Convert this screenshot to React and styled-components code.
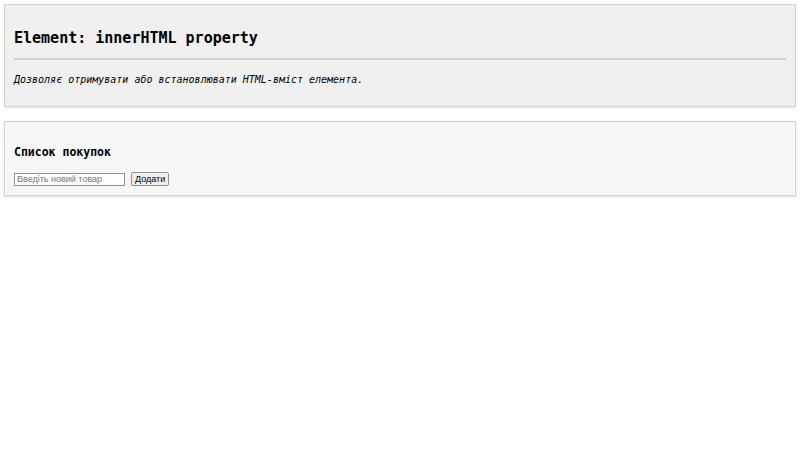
import React from "react";
import styled, { createGlobalStyle } from "styled-components";

const Global = createGlobalStyle`
  html, body { margin: 0; padding: 0; background: #fff; }
  body { font-family: "DejaVu Sans Mono", monospace; color: #000; }
`;

const Page = styled.div`
  display: flex;
  flex-direction: column;
  gap: 14px;
  padding: 4px;
`;

const Card = styled.section`
  background: ${(p) => (p.$light ? "#f7f7f7" : "#f0f0f0")};
  border: 1px solid #d0d0d0;
  box-shadow: 0 1px 2px rgba(0, 0, 0, 0.12);
  padding: 10px 9px 9px;
`;

const Title = styled.h1`
  font-family: "DejaVu Sans Mono", monospace;
  font-weight: bold;
  font-size: 15px;
  line-height: 18px;
  margin: 14px 0 11px;
`;

const Rule = styled.hr`
  border: none;
  border-top: 2px solid #cfcfcf;
  margin: 0 0 14px;
`;

const Lead = styled.p`
  font-family: "DejaVu Sans Mono", monospace;
  font-style: italic;
  font-size: 10px;
  line-height: 12px;
  margin: 0 0 11px;
`;

const SubTitle = styled.h2`
  font-family: "DejaVu Sans Mono", monospace;
  font-weight: bold;
  font-size: 11.5px;
  line-height: 14px;
  margin: 13px 0 13px;
`;

const Form = styled.div`
  display: flex;
  align-items: center;
  gap: 6px;
`;

const Input = styled.input`
  width: 111px;
  height: 13px;
  box-sizing: border-box;
  font-family: "Liberation Sans", Arial, sans-serif;
  font-size: 9px;
  padding: 0 2px;
  border: 1px solid #8f8f8f;
  background: #fff;
  &::placeholder { color: #757575; }
`;

const Button = styled.button`
  height: 14px;
  box-sizing: border-box;
  font-family: "Liberation Sans", Arial, sans-serif;
  font-size: 9px;
  font-weight: normal;
  padding: 0 3px;
  border: 1px solid #8f8f8f;
  border-radius: 2px;
  background: #efefef;
  color: #000;
`;

export default function App() {
  return (
    <>
      <Global />
      <Page>
        <Card>
          <Title>Element: innerHTML property</Title>
          <Rule />
          <Lead>Дозволяє отримувати або встановлювати HTML-вміст елемента.</Lead>
        </Card>
        <Card $light>
          <SubTitle>Список покупок</SubTitle>
          <Form>
            <Input placeholder="Введіть новий товар" />
            <Button>Додати</Button>
          </Form>
        </Card>
      </Page>
    </>
  );
}
